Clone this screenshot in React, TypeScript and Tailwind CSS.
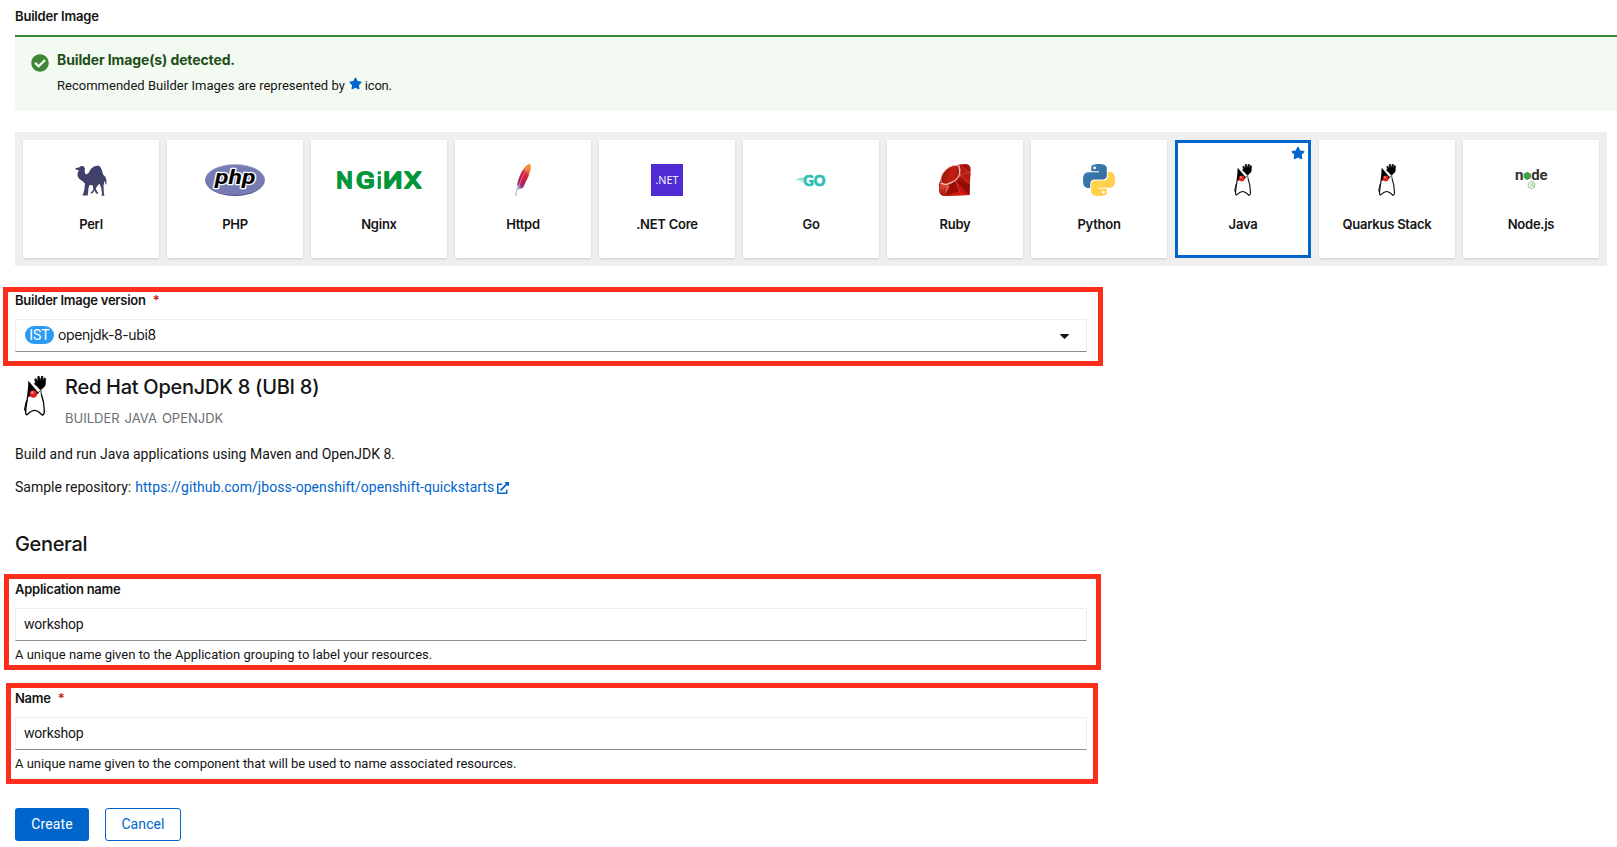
import React from "react";
import { FaCheckCircle, FaExternalLinkAlt, FaStar } from "react-icons/fa";

function PerlLogo() {
  return (
    <svg width="32" height="32" viewBox="0 0 32 32" fill="#40406b">
      <path d="M.3 5.2 1 4l3-.6L6 2l2.600.2L10 4.600 9.600 8l1.200 2.600 2.400-1L16 4.800 19 2.600 23.500 1.600 25.500 3 27 6.500 28 10.500l2.200 2 1.300 3.500-.2 4.300-1 .2-.2-3.500-1 1.300-.6 3.500.4 7.700.6 2.300h-3.200l.8-2-.9-5.800-1.600-4.200-2 1.700-1.900 3.100 1.200 2.400 1.600 2.200-1.700.5-2-3.400-2.200 2.900-2.500.3 3.300-3.700-.7-5-1.600.4-1.400-.5-1.200 3.300-.5 5.200-.3 2.300H7.200l1-1.700 1.300-4.700.4-5.500L8 17.400 4.300 15 2.500 12l.2-3.500L4 6.500l-1.500-.6z" />
      <path d="M11 13 28 12 29 18 23 17.500 17 20 10.500 18z" />
      <path d="M17 19 21.500 29.500" stroke="#40406b" strokeWidth="1" />
    </svg>
  );
}

function PhpLogo() {
  return (
    <svg width="60" height="32" viewBox="0 0 60 32">
      <defs>
        <linearGradient id="php-rim" x1="0" y1="0" x2="0" y2="1">
          <stop offset="0" stopColor="#aeb2d5" />
          <stop offset="1" stopColor="#484c89" />
        </linearGradient>
      </defs>
      <ellipse cx="30" cy="16" rx="30" ry="16" fill="url(#php-rim)" />
      <ellipse cx="30" cy="16" rx="29" ry="15.1" fill="#777bb3" />
      <text
        x="10"
        y="20"
        textLength="40.500"
        lengthAdjust="spacingAndGlyphs"
        className="font-[Roboto] text-[20px] font-bold italic"
        fill="#000"
        stroke="#fff"
        strokeWidth="2.400"
        strokeLinejoin="round"
        paintOrder="stroke"
      >
        php
      </text>
    </svg>
  );
}

function NginxLogo() {
  const letters = [
    { glyph: "N", x: 3.2, width: 16.5 },
    { glyph: "G", x: 23, width: 18.8 },
    { glyph: "И", x: 50, width: 19.500 },
    { glyph: "X", x: 71.2, width: 17 },
  ];
  return (
    <svg
      width="92"
      height="32"
      viewBox="0 0 92 32"
      fill="#009639"
      stroke="#009639"
      strokeWidth="1.900"
      strokeLinejoin="round"
    >
      {letters.map((l) => (
        <text
          key={l.glyph}
          x={l.x}
          y="24.200"
          textLength={l.width}
          lengthAdjust="spacingAndGlyphs"
          className="font-[Roboto] text-[22.500px] font-normal"
        >
          {l.glyph}
        </text>
      ))}
      <rect x="45.700" y="8.200" width="1.200" height="1.200" />
      <rect x="45.700" y="13" width="1.200" height="11" />
    </svg>
  );
}

function HttpdLogo() {
  return (
    <svg width="16" height="32" viewBox="0 0 16 32">
      <defs>
        <linearGradient id="feather" x1="0.8" y1="0" x2="0.25" y2="1">
          <stop offset="0" stopColor="#f69923" />
          <stop offset="0.2" stopColor="#f47b3a" />
          <stop offset="0.38" stopColor="#d1233d" />
          <stop offset="0.7" stopColor="#be2153" />
          <stop offset="0.88" stopColor="#8c3689" />
          <stop offset="1" stopColor="#a79bc4" />
        </linearGradient>
      </defs>
      <path d="M14.200 0c1.800.4 2 2.800 1.300 6.200l-2.200 6.500-2.600 5.300-2.300 5.200-1.800 1.200-3 1.200-.9-1.800-.7-3.400L3.500 15l3-7L10 3.200C11.500 1.200 13 .1 14.200 0z" fill="url(#feather)" />
      <path d="M12.500 3.500C8.600 10 5.400 16.500 3.300 24" fill="none" stroke="#efb0a5" strokeWidth=".6" />
      <path d="M3.300 23C1.600 26 .8 29 .6 32" fill="none" stroke="#aaa1c8" strokeWidth="1" />
    </svg>
  );
}

function DotNetLogo() {
  return (
    <svg width="32" height="32" viewBox="0 0 32 32">
      <path d="M0 0h32v32H0z" fill="#512bd4" />
      <text x="4.500" y="20.400" textLength="23" lengthAdjust="spacingAndGlyphs" className="font-['Open_Sans'] text-[11.500px] font-medium" fill="#fff">
        .NET
      </text>
    </svg>
  );
}

function GoLogo() {
  return (
    <svg width="30" height="32" viewBox="0 0 30 32" fill="#2bbfb3">
      <path d="M3 13.700h5.500l-.5 1H2.600zM.4 15.200h7.200l-.4 1H0zM5 16.700h2.200l-.3 1H4.700z" opacity=".7" />
      <text
        x="7.300"
        y="21.500"
        textLength="22"
        lengthAdjust="spacingAndGlyphs"
        className="font-[Lato] text-[14.500px] font-black"
        stroke="#2bbfb3"
        strokeWidth=".7"
      >
        GO
      </text>
    </svg>
  );
}

function RubyLogo() {
  return (
    <svg width="32" height="32" viewBox="0 0 32 32">
      <defs>
        <linearGradient id="ruby-top" x1="0" y1="0" x2="1" y2="1">
          <stop offset="0" stopColor="#8e0f08" />
          <stop offset="0.55" stopColor="#c02015" />
          <stop offset="1" stopColor="#a0130b" />
        </linearGradient>
        <linearGradient id="ruby-side" x1="0" y1="0" x2="0" y2="1">
          <stop offset="0" stopColor="#e5573f" />
          <stop offset="1" stopColor="#a81208" />
        </linearGradient>
      </defs>
      <path d="M20 .4 27 0c3.200.5 4.700 2.300 4.600 5.500L30.500 31 5.500 32C2 31.800 0 29.500.2 26L0 20 3.500 11z" fill="#a91009" />
      <path d="M1.500 19.500 7.500 20.300 4.500 31.500C1.500 31 .4 29 .4 26z" fill="url(#ruby-side)" />
      <path d="M7.500 20.300 16.500 16.500 20.500 27 5.500 31.500z" fill="#9c0f08" />
      <path d="M7.500 20.300 10.500 22.500 5.500 31.500z" fill="#e2604a" />
      <path d="M16.500 16.500 30.500 20 30.500 31z" fill="#8d0d06" />
      <path d="M16.500 16.500 20.500 28 30 31z" fill="#c3180e" />
      <path d="M20.800 11.500 31.300 10 30.500 21z" fill="#b91a10" />
      <path d="M20.500 2 31 7.500 31.400 11 20.800 11.500z" fill="#b51a10" />
      <path d="M5.500 31.700 20.500 27.500 30.500 31z" fill="#cf1b10" />
      <ellipse cx="11.500" cy="11" rx="11.700" ry="7" transform="rotate(-45 11.500 11)" fill="url(#ruby-top)" stroke="#efc8c1" strokeWidth=".7" />
      <path d="M20 .8 20.800 11.500 16.500 16.500 7.500 20.300 1.500 19.500" fill="none" stroke="#f4d5cf" strokeWidth=".9" />
      <path d="M20.800 11.500 31 19.500M16.500 16.500 20.500 28M20.800 11.500 31.400 7.500M22 1.500l9 8.500" fill="none" stroke="#df7466" strokeWidth=".4" />
    </svg>
  );
}

function PythonLogo() {
  return (
    <svg width="32" height="32" viewBox="0 0 24 24">
      <defs>
        <linearGradient id="py-blue" x1="0" y1="0" x2="1" y2="1">
          <stop offset="0" stopColor="#3f80b5" />
          <stop offset="1" stopColor="#306998" />
        </linearGradient>
        <linearGradient id="py-yellow" x1="0" y1="0" x2="1" y2="1">
          <stop offset="0" stopColor="#ffd845" />
          <stop offset="1" stopColor="#ffc94f" />
        </linearGradient>
      </defs>
      <path
        fill="url(#py-blue)"
        d="M14.25.18l.9.2.73.26.59.3.45.32.34.34.25.34.16.33.1.3.04.26.02.2-.01.13V8.5l-.05.63-.13.55-.21.46-.26.38-.3.31-.33.25-.35.19-.35.14-.33.1-.3.07-.26.04-.21.02H8.77l-.69.05-.59.14-.5.22-.41.27-.33.32-.27.35-.2.36-.15.37-.1.35-.07.32-.04.27-.02.21v3.06H3.17l-.21-.03-.28-.07-.32-.12-.35-.18-.36-.26-.36-.36-.35-.46-.32-.59-.28-.73-.21-.88-.14-1.05-.05-1.23.06-1.22.16-1.04.24-.87.32-.71.36-.57.4-.44.42-.33.42-.24.4-.16.36-.1.32-.05.24-.01h.16l.06.01h8.16v-.83H6.18l-.01-2.75-.02-.37.05-.34.11-.31.17-.28.25-.26.31-.23.38-.2.44-.18.51-.15.58-.12.64-.1.71-.06.77-.04.84-.02 1.27.05zm-6.3 1.98l-.23.33-.08.41.08.41.23.34.33.22.41.09.41-.09.33-.22.23-.34.08-.41-.08-.41-.23-.33-.33-.22-.41-.09-.41.09z"
      />
      <path
        fill="url(#py-yellow)"
        d="M21.04 6.11l.28.06.32.12.35.18.36.27.36.35.35.47.32.59.28.73.21.88.14 1.04.05 1.23-.06 1.23-.16 1.04-.24.86-.32.71-.36.57-.4.45-.42.33-.42.24-.4.16-.36.09-.32.05-.24.02-.16-.01h-8.22v.82h5.84l.01 2.76.02.36-.05.34-.11.31-.17.29-.25.25-.31.24-.38.2-.44.17-.51.15-.58.13-.64.09-.71.07-.77.04-.84.01-1.27-.04-1.07-.14-.9-.2-.73-.25-.59-.3-.45-.33-.34-.34-.25-.34-.16-.33-.1-.3-.04-.25-.02-.2.01-.13v-5.34l.05-.64.13-.54.21-.46.26-.38.3-.32.33-.24.35-.2.35-.14.33-.1.3-.06.26-.04.21-.02.13-.01h5.84l.69-.05.59-.14.5-.21.41-.28.33-.32.27-.35.2-.36.15-.36.1-.35.07-.32.04-.28.02-.21V6.07h2.09l.14.01zm-6.47 14.25l-.23.33-.08.41.08.41.23.33.33.23.41.08.41-.08.33-.23.23-.33.08-.41-.08-.41-.23-.33-.33-.23-.41-.08-.41.08z"
      />
    </svg>
  );
}

function Duke({ className }: { className: string }) {
  return (
    <svg className={className} viewBox="0 0 66 120">
      <path
        d="M11 60C10 76 5 90 5 108 5 114 6 117 9 116 16 110 22 103 32 103 42 103 47 110 53 116 58 119 61 113 61 106 61 84 56 66 52 55"
        fill="#fff"
        stroke="#000"
        strokeWidth="4"
        strokeLinejoin="round"
      />
      <path d="M9 73C3 82 6 88 3 94 1 100 2 105 6 105" fill="none" stroke="#000" strokeWidth="3.500" />
      <path d="M52 56 50 38M40 54 48 44" stroke="#000" strokeWidth="2.500" />
      <path d="M13 14 44 51 34 60 9 62C11 46 13 30 13 14z" fill="#000" />
      <path
        d="M35 22 32 9 36 8 42 17 41 2 45 0 49 14 53 0 57 1 56 15 61 6 65 7 64 24 62 31 52 40 45 38 40 31 33 26 31 22z"
        fill="#000"
        stroke="#000"
        strokeWidth="2"
      />
      <circle cx="28" cy="54" r="11" fill="#e01e1e" />
      <circle cx="25" cy="50" r="4" fill="#ff8a80" />
    </svg>
  );
}

function NodeLogo() {
  return (
    <svg width="33" height="32" viewBox="0 0 33 32" className="font-[Roboto]">
      <text x="0" y="15.800" textLength="8.500" lengthAdjust="spacingAndGlyphs" className="text-[14px] font-bold" fill="#333">
        n
      </text>
      <path d="m12.300 7.700 3.600 2.100v4.200l-3.600 2.100-3.600-2.100V9.800z" fill="#43a047" />
      <text x="16.200" y="15.800" textLength="16.500" lengthAdjust="spacingAndGlyphs" className="text-[14px] font-bold" fill="#333">
        de
      </text>
      <path d="m16.500 17.200 3.200 1.900v4l-3.200 1.900-3.200-1.900v-4z" fill="none" stroke="#7cb97c" strokeWidth=".8" />
      <path d="M16 19v3.500l-1 .5M18.600 19.600h-1.300v1.300h1.100v1.500h-1.300" fill="none" stroke="#69ad69" strokeWidth=".6" />
    </svg>
  );
}

const builders = [
  { name: "Perl", logo: <PerlLogo /> },
  { name: "PHP", logo: <PhpLogo /> },
  { name: "Nginx", logo: <NginxLogo /> },
  { name: "Httpd", logo: <HttpdLogo /> },
  { name: ".NET Core", logo: <DotNetLogo /> },
  { name: "Go", logo: <GoLogo /> },
  { name: "Ruby", logo: <RubyLogo /> },
  { name: "Python", logo: <PythonLogo /> },
  { name: "Java", logo: <Duke className="h-8 w-[18px]" />, selected: true },
  { name: "Quarkus Stack", logo: <Duke className="h-8 w-[18px]" /> },
  { name: "Node.js", logo: <NodeLogo /> },
];

function FieldLabel({ children, required }: { children: string; required?: boolean }) {
  return (
    <label className="flex pb-0.5 font-[Inter] text-[13px] leading-4 font-semibold tracking-[-0.26px]">
      {children}
      {required && <span className="ml-[7px] text-[#c9190b]">*</span>}
    </label>
  );
}

const control =
  "mt-[9px] flex h-[33px] w-[1072px] items-center border border-[#ededed] border-b-[#8a8d90] bg-white pb-px text-sm";

export default function App() {
  return (
    <main className="flex h-[847px] w-full flex-col items-start overflow-hidden bg-white pt-[7px] font-[Roboto,sans-serif] text-[#151515]">
      <h2 className="ml-[15px] pb-0.5 font-[Inter] text-[13px] leading-[18px] font-semibold tracking-[-0.19px]">Builder Image</h2>

      <section className="mt-2 ml-[15px] flex h-[76px] w-[1602px] border-t-2 border-[#3e8635] bg-[#f3faf2] pt-[13px] pl-4">
        <FaCheckCircle className="mt-1 size-[18px] text-[#3e8635]" />
        <div className="ml-2">
          <h3 className="pb-0.5 font-[Inter] text-sm leading-[19px] font-bold tracking-[-0.12px] text-[#1e4f18]">
            Builder Image(s) detected.
          </h3>
          <p className="mt-[5px] flex text-[13px] leading-5 tracking-[0.01px]">
            Recommended Builder Images are represented by
            <FaStar className="mt-px mr-[3px] ml-1 size-[13px] text-[#06c]" />
            <span className="tracking-[-0.2px]">icon.</span>
          </p>
        </div>
      </section>

      <section className="mt-[21px] ml-[15px] flex h-[134px] gap-2 bg-[#efefef] p-2">
        {builders.map((b) => (
          <button
            key={b.name}
            className={
              b.selected
                ? "relative flex h-[118px] w-[136px] flex-col items-center bg-white pt-6 shadow-[inset_0_0_0_3px_#0066cc]"
                : "relative flex h-[118px] w-[136px] flex-col items-center bg-white pt-6 shadow-[0_1px_2px_rgba(3,3,3,0.14)]"
            }
          >
            <span className="flex h-8 items-center">{b.logo}</span>
            <span className="mt-[18px] font-[Inter] text-[13px] leading-5 font-semibold tracking-[-0.25px]">{b.name}</span>
            {b.selected && <FaStar className="absolute top-[6px] right-[6px] size-[14px] text-[#06c]" />}
          </button>
        ))}
      </section>

      <section className="mt-[21px] ml-[3px] h-[79px] w-[1100px] border-[5px] border-[#ff2d1c] pl-[7px]">
        <FieldLabel required>Builder Image version</FieldLabel>
        <div className={control}>
          <span className="ml-[9px] flex h-[18px] w-[29px] items-center justify-center rounded-full bg-[#2b9af3] text-sm text-white">
            IST
          </span>
          <span className="ml-1 font-[Inter] tracking-[-0.36px]">openjdk-8-ubi8</span>
          <svg className="mt-0.5 mr-[17px] ml-auto h-[5px] w-[9px]" viewBox="0 0 9 5">
            <path d="M.3 0h8.400v1L4.500 5 .3 1z" fill="#151515" />
          </svg>
        </div>
      </section>

      <section className="mt-2.5 ml-[15px] flex">
        <Duke className="ml-[9px] h-10 w-[22px]" />
        <div className="-mt-px ml-[19px]">
          <h1 className="font-[Inter] text-xl leading-[25px] font-medium tracking-[-0.27px]">Red Hat OpenJDK 8 (UBI 8)</h1>
          <div className="mt-2 flex gap-[5px] pb-px font-[Inter] text-[13px] leading-5 text-[#6a6e73]">
            <span>BUILDER</span>
            <span>JAVA</span>
            <span>OPENJDK</span>
          </div>
        </div>
      </section>

      <p className="mt-[15px] ml-[15px] text-sm leading-[21px]">Build and run Java applications using Maven and OpenJDK 8.</p>
      <p className="mt-3 ml-[15px] flex text-sm leading-[21px]">
        Sample repository:
        <a className="ml-1 flex items-center tracking-[0.055px] text-[#06c]">
          https://github.com/jboss-openshift/openshift-quickstarts
          <FaExternalLinkAlt className="ml-[3px] size-3" />
        </a>
      </p>

      <h1 className="mt-[34px] ml-[15px] font-[Inter] text-xl leading-[25px] font-medium tracking-[-0.35px]">General</h1>

      <section className="mt-[17px] ml-1 h-24 w-[1097px] border-[5px] border-[#ff2d1c] pt-0.5 pl-1.5">
        <FieldLabel>Application name</FieldLabel>
        <div className={control}>
          <span className="ml-2 tracking-[-0.2px]">workshop</span>
        </div>
        <p className="mt-[5px] text-[13px] leading-[18px]">
          A unique name given to the Application grouping to label your resources.
        </p>
      </section>

      <section className="mt-[13px] ml-1.5 h-[101px] w-[1092px] border-[5px] border-[#ff2d1c] pt-0.5 pl-1">
        <FieldLabel required>Name</FieldLabel>
        <div className={control}>
          <span className="ml-2 tracking-[-0.2px]">workshop</span>
        </div>
        <p className="mt-[5px] text-[13px] leading-[18px] tracking-[-0.03px]">
          A unique name given to the component that will be used to name associated resources.
        </p>
      </section>

      <div className="mt-6 ml-[15px] flex gap-4 text-sm tracking-[0.1px]">
        <button className="h-[33px] w-[74px] rounded-[3px] bg-[#06c] pb-px text-white">Create</button>
        <button className="h-[33px] w-[76px] rounded-[3px] border border-[#06c] pb-px text-[#06c]">Cancel</button>
      </div>
    </main>
  );
}
